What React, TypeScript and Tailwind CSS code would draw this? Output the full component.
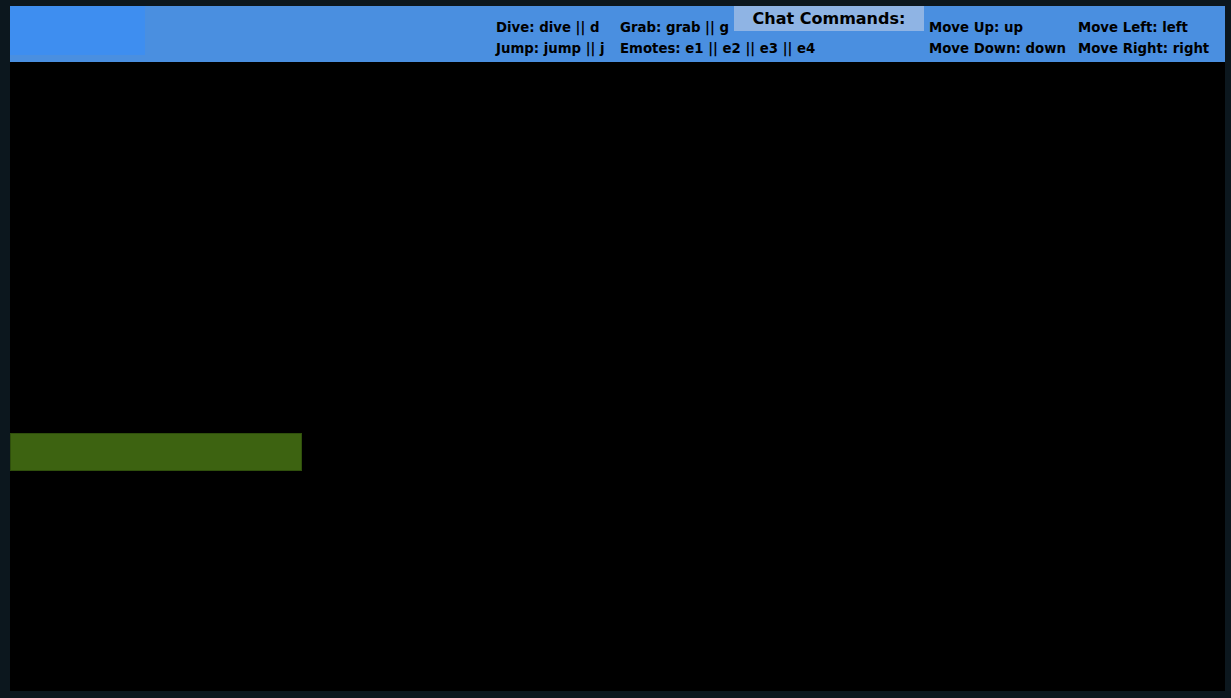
export default function App() {
  const font = { fontFamily: '"DejaVu Sans", Verdana, sans-serif' };
  return (
    <div className="w-[1231px] h-[698px] bg-[#0c171e] pt-[6px] pl-[10px]">
      <div className="w-[1215px] h-[685px] bg-black flex flex-col">
        <div className="h-[56px] bg-[#4a8fe0] flex text-black font-bold" style={font}>
          <div className="w-[135px] h-[49px] bg-[#3e8ef0]" />
          <div className="flex flex-col gap-[2px] pt-[12px] pl-[351px] text-[13.3px] leading-[19px] w-[475px]">
            <span className="whitespace-nowrap">Dive: dive || d</span>
            <span className="whitespace-nowrap">Jump: jump || j</span>
          </div>
          <div className="flex flex-col gap-[2px] pt-[12px] text-[13.3px] leading-[19px] w-[114px]">
            <span className="whitespace-nowrap">Grab: grab || g</span>
            <span className="whitespace-nowrap">Emotes: e1 || e2 || e3 || e4</span>
          </div>
          <div className="w-[190px] h-[25px] bg-[#8fb4e4] text-[16px] leading-[25px] text-center">
            Chat Commands:
          </div>
          <div className="flex flex-col gap-[2px] pt-[12px] pl-[5px] text-[13.3px] leading-[19px] w-[154px]">
            <span className="whitespace-nowrap">Move Up: up</span>
            <span className="whitespace-nowrap">Move Down: down</span>
          </div>
          <div className="flex flex-col gap-[2px] pt-[12px] text-[13.3px] leading-[19px]">
            <span className="whitespace-nowrap">Move Left: left</span>
            <span className="whitespace-nowrap">Move Right: right</span>
          </div>
        </div>
        <div className="flex-1 flex flex-col">
          <div className="h-[371px]" />
          <div className="w-[292px] h-[38px] bg-[#3d6311] border border-[#2f4f0c]" />
        </div>
      </div>
    </div>
  );
}
